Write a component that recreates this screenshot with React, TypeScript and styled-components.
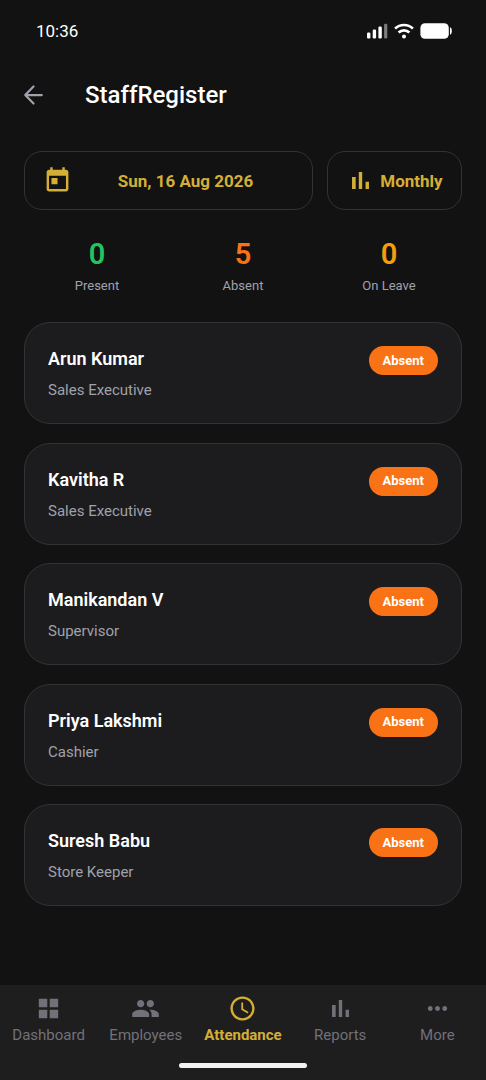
import React from "react";
import styled, { createGlobalStyle } from "styled-components";

const GlobalStyle = createGlobalStyle`
  *, *::before, *::after { box-sizing: border-box; }
  body {
    margin: 0;
    background: #121212;
    color: #ffffff;
    font-family: Roboto, "Liberation Sans", sans-serif;
  }
  button { font: inherit; color: inherit; background: none; border: 0; padding: 0; cursor: pointer; }
  h1, h2, p, ul, dl, dd { margin: 0; padding: 0; }
  svg { display: block; flex: none; }
`;

const Screen = styled.div`
  min-height: 100vh;
  display: flex;
  flex-direction: column;
`;

const StatusBar = styled.div`
  display: flex;
  align-items: center;
  justify-content: space-between;
  height: 62px;
  padding: 0 34px 0 36px;
`;

const Clock = styled.time`
  font-size: 17px;
  line-height: 20px;
`;

const StatusIcons = styled.div`
  display: flex;
  align-items: center;
  gap: 6px;
`;

const AppBar = styled.header`
  display: flex;
  align-items: center;
  height: 66px;
  padding: 0 18px;
`;

const BackButton = styled.button`
  display: flex;
  margin-right: 37px;
  color: #a1a1aa;
`;

const Title = styled.h1`
  font-size: 24px;
  line-height: 28px;
  font-weight: 500;
`;

const Content = styled.main`
  flex: 1;
  display: flex;
  flex-direction: column;
  padding: 23px 24px 32px;
`;

const Filters = styled.div`
  display: flex;
  gap: 14px;
`;

const FilterButton = styled.button<{ $grow?: boolean }>`
  display: flex;
  align-items: center;
  justify-content: center;
  gap: 5px;
  flex: ${(p) => (p.$grow ? "1" : "0 0 135px")};
  height: 59px;
  padding: 0 18px;
  border: 1px solid #333335;
  border-radius: 18px;
  color: #d4af37;
  font-size: 17px;
  line-height: 20px;
  font-weight: 700;
`;

const FilterText = styled.span<{ $grow?: boolean }>`
  flex: ${(p) => (p.$grow ? "1" : "none")};
  text-align: center;
`;

const Summary = styled.dl`
  display: grid;
  grid-template-columns: repeat(3, 1fr);
  margin-top: 26px;
`;

const Stat = styled.div`
  display: flex;
  flex-direction: column-reverse;
  align-items: center;
  gap: 6px;
`;

const StatValue = styled.dd<{ $color: string }>`
  color: ${(p) => p.$color};
  font-size: 29px;
  line-height: 36px;
  font-weight: 600;
`;

const StatLabel = styled.dt`
  color: #a1a1aa;
  font-size: 13px;
  line-height: 16px;
`;

const StaffList = styled.ul`
  display: flex;
  flex-direction: column;
  justify-content: space-between;
  min-height: 584px;
  margin-top: 28px;
  list-style: none;
`;

const StaffCard = styled.li`
  display: flex;
  align-items: flex-start;
  justify-content: space-between;
  height: 102px;
  padding: 23px;
  background: #1c1c1e;
  border: 1px solid #333335;
  border-radius: 26px;
`;

const StaffName = styled.h2`
  font-size: 18px;
  line-height: 26px;
  font-weight: 600;
`;

const StaffRole = styled.p`
  margin-top: 8px;
  color: #a1a1aa;
  font-size: 15px;
  line-height: 20px;
`;

const StatusPill = styled.button`
  height: 29px;
  padding: 0 14px;
  border-radius: 15px;
  background: #f97316;
  color: #ffffff;
  font-size: 13px;
  line-height: 16px;
  font-weight: 700;
`;

const BottomBar = styled.footer`
  background: #1e1e1e;
`;

const Tabs = styled.nav`
  display: grid;
  grid-template-columns: repeat(5, 1fr);
  padding-top: 9px;
`;

const Tab = styled.button<{ $active?: boolean }>`
  display: flex;
  flex-direction: column;
  align-items: center;
  gap: 2px;
  color: ${(p) => (p.$active ? "#d4af37" : "#71717a")};
  font-size: 15px;
  line-height: 20px;
  font-weight: ${(p) => (p.$active ? 700 : 400)};
`;

const HomeIndicator = styled.div`
  width: 128px;
  height: 5px;
  margin: 18px auto 12px;
  border-radius: 3px;
  background: #f2f2f2;
`;

const icons = {
  today:
    "M19 3h-1V1h-2v2H8V1H6v2H5c-1.11 0-1.99.9-1.99 2L3 19c0 1.1.89 2 2 2h14c1.1 0 2-.9 2-2V5c0-1.1-.9-2-2-2zm0 16H5V8h14v11zM7 10h5v5H7z",
  chart: "M5 9.2h3V19H5zM10.6 5h2.8v14h-2.8zM16.2 13H19v6h-2.8z",
  grid: "M4 4h7v7H4zM13 4h7v7h-7zM4 13h7v7H4zM13 13h7v7h-7z",
  people:
    "M16 11c1.66 0 2.99-1.34 2.99-3S17.66 5 16 5c-1.66 0-3 1.34-3 3s1.34 3 3 3zm-8 0c1.66 0 2.99-1.34 2.99-3S9.66 5 8 5C6.34 5 5 6.34 5 8s1.34 3 3 3zm0 2c-2.33 0-7 1.17-7 3.5V19h14v-2.5c0-2.33-4.67-3.5-7-3.5zm8 0c-.29 0-.62.02-.97.05 1.16.84 1.97 1.97 1.97 3.45V19h6v-2.5c0-2.33-4.67-3.5-7-3.5z",
  schedule:
    "M11.99 2C6.47 2 2 6.48 2 12s4.47 10 9.99 10C17.52 22 22 17.52 22 12S17.52 2 11.99 2zM12 20c-4.42 0-8-3.58-8-8s3.58-8 8-8 8 3.58 8 8-3.58 8-8 8zm.5-13H11v6l5.25 3.15.75-1.23-4.5-2.67z",
  more:
    "M6 10c-1.1 0-2 .9-2 2s.9 2 2 2 2-.9 2-2-.9-2-2-2zm12 0c-1.1 0-2 .9-2 2s.9 2 2 2 2-.9 2-2-.9-2-2-2zm-6 0c-1.1 0-2 .9-2 2s.9 2 2 2 2-.9 2-2-.9-2-2-2z",
};

function Icon({ name }: { name: keyof typeof icons }) {
  return (
    <svg width="29" height="29" viewBox="0 0 24 24" fill="currentColor" aria-hidden="true">
      <path d={icons[name]} />
    </svg>
  );
}

const stats = [
  { label: "Present", value: 0, color: "#22c55e" },
  { label: "Absent", value: 5, color: "#f97316" },
  { label: "On Leave", value: 0, color: "#f59e0b" },
];

const staff = [
  { name: "Arun Kumar", role: "Sales Executive" },
  { name: "Kavitha R", role: "Sales Executive" },
  { name: "Manikandan V", role: "Supervisor" },
  { name: "Priya Lakshmi", role: "Cashier" },
  { name: "Suresh Babu", role: "Store Keeper" },
];

const tabs: { label: string; icon: keyof typeof icons; active?: boolean }[] = [
  { label: "Dashboard", icon: "grid" },
  { label: "Employees", icon: "people" },
  { label: "Attendance", icon: "schedule", active: true },
  { label: "Reports", icon: "chart" },
  { label: "More", icon: "more" },
];

export default function App() {
  return (
    <Screen>
      <GlobalStyle />
      <StatusBar>
        <Clock>10:36</Clock>
        <StatusIcons>
          <svg width="21" height="16" viewBox="0 0 21 16" fill="#fff" aria-hidden="true">
            <rect x="0" y="9.5" width="3.4" height="6" rx="1.2" />
            <rect x="5.7" y="6.5" width="3.4" height="9" rx="1.2" />
            <rect x="11.4" y="3.5" width="3.4" height="12" rx="1.2" />
            <rect x="17.1" y="0.8" width="3.2" height="14.7" rx="1.2" opacity="0.45" />
          </svg>
          <svg width="20" height="16" viewBox="0 0 20 16" fill="none" stroke="#fff" strokeWidth="2.7" aria-hidden="true">
            <path d="M1.1 5.6a12.8 12.8 0 0 1 17.8 0" />
            <path d="M4.6 9.5a7.8 7.8 0 0 1 10.8 0" />
            <circle cx="10" cy="13.6" r="2" fill="#fff" stroke="none" />
          </svg>
          <svg width="32" height="16" viewBox="0 0 32 16" fill="#fff" aria-hidden="true">
            <rect x="0.4" y="0.2" width="28.4" height="15.6" rx="4.6" />
            <path d="M30 4.6h.6c1.6.8 1.6 6 0 6.8H30z" />
          </svg>
        </StatusIcons>
      </StatusBar>
      <AppBar>
        <BackButton aria-label="Back">
          <svg width="30" height="30" viewBox="0 0 24 24" fill="none" stroke="currentColor" strokeWidth="1.8" strokeLinecap="round" strokeLinejoin="round" aria-hidden="true">
            <path d="M19 12H5.8M12.4 5.2 5.8 12l6.6 6.8" />
          </svg>
        </BackButton>
        <Title>StaffRegister</Title>
      </AppBar>
      <Content>
        <Filters>
          <FilterButton $grow>
            <Icon name="today" />
            <FilterText $grow>Sun, 16 Aug 2026</FilterText>
          </FilterButton>
          <FilterButton>
            <Icon name="chart" />
            <FilterText>Monthly</FilterText>
          </FilterButton>
        </Filters>
        <Summary>
          {stats.map((s) => (
            <Stat key={s.label}>
              <StatLabel>{s.label}</StatLabel>
              <StatValue $color={s.color}>{s.value}</StatValue>
            </Stat>
          ))}
        </Summary>
        <StaffList>
          {staff.map((s) => (
            <StaffCard key={s.name}>
              <div>
                <StaffName>{s.name}</StaffName>
                <StaffRole>{s.role}</StaffRole>
              </div>
              <StatusPill>Absent</StatusPill>
            </StaffCard>
          ))}
        </StaffList>
      </Content>
      <BottomBar>
        <Tabs>
          {tabs.map((t) => (
            <Tab key={t.label} $active={t.active} aria-current={t.active ? "page" : undefined}>
              <Icon name={t.icon} />
              {t.label}
            </Tab>
          ))}
        </Tabs>
        <HomeIndicator />
      </BottomBar>
    </Screen>
  );
}
